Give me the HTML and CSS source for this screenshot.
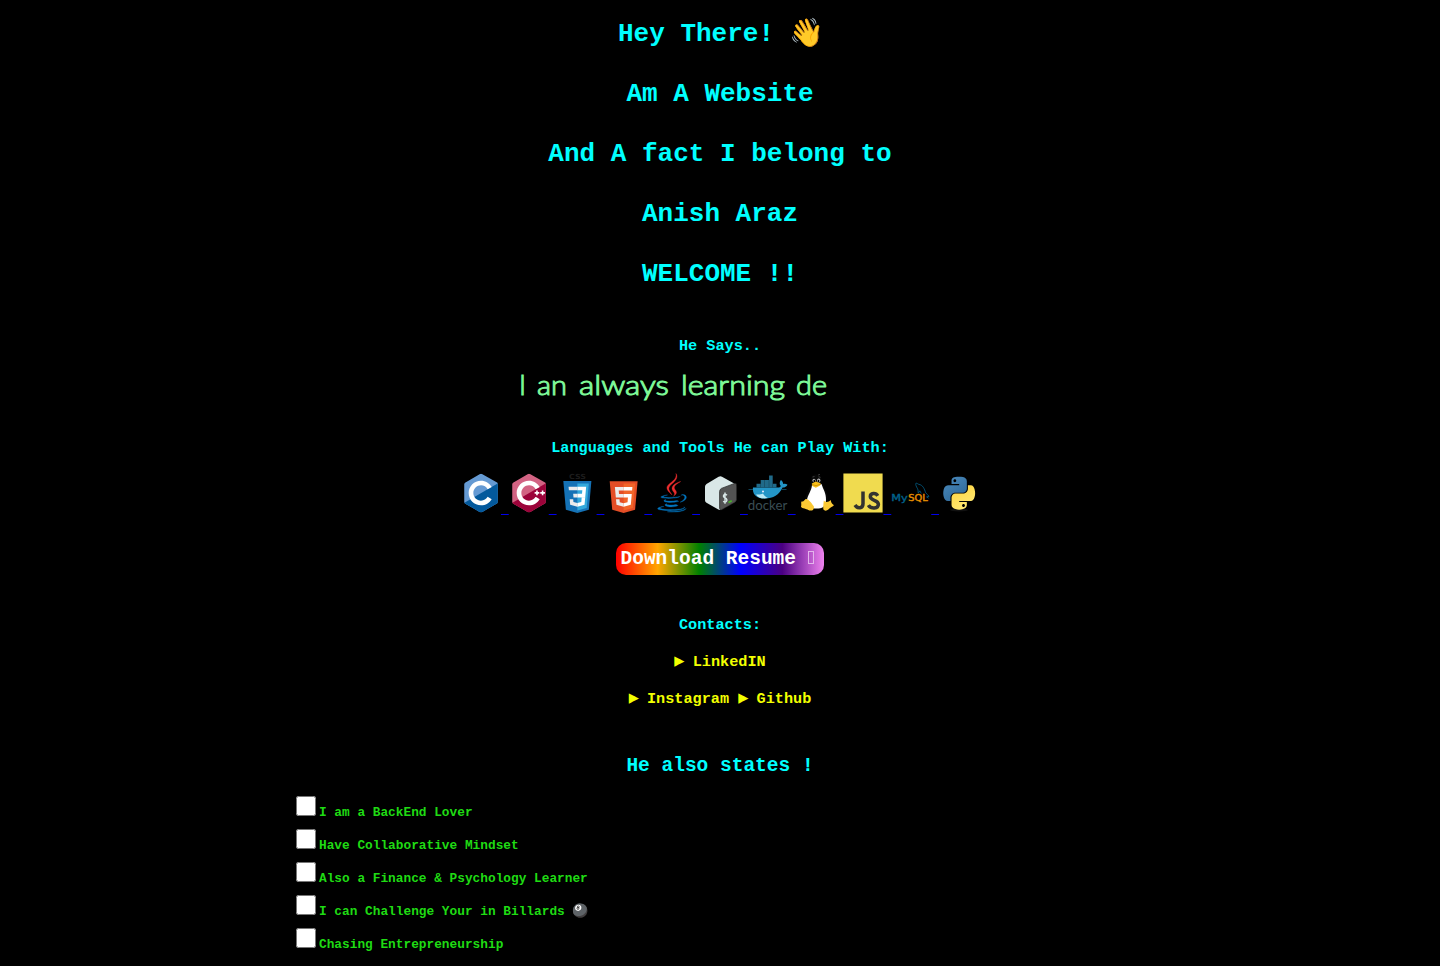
FILE: index.html
```html
<!DOCTYPE html>
<html lang="en">
<head>
<meta charset="utf-8">
<title>Anish Araz</title>
<link rel="stylesheet" href="styles.css">
</head>
<body>
<main class="page">
  <header class="intro">
    <h1>Hey There! <span class="wave">👋</span></h1>
    <h1>Am A Website</h1>
    <h1>And A fact I belong to</h1>
    <h1>Anish Araz</h1>
    <h1>WELCOME !!</h1>
  </header>

  <h3 class="says">He Says..</h3>
  <svg class="typing" width="420" height="50" viewBox="0 0 420 50">
    <text y="30"><tspan x="9">I</tspan><tspan x="27" textLength="30" lengthAdjust="spacingAndGlyphs">an</tspan><tspan x="69" textLength="90" lengthAdjust="spacingAndGlyphs">always</tspan><tspan x="171" textLength="104" lengthAdjust="spacingAndGlyphs">learning</tspan><tspan x="286" textLength="31" lengthAdjust="spacingAndGlyphs">de</tspan></text>
  </svg>

  <h3 class="tools-title">Languages and Tools He can Play With:</h3>
  <p class="tools">
    <a href="#"><svg viewBox="0 0 128 128"><defs><clipPath id="hex"><path d="M117.5 33.5l.3-.2c-.6-1.1-1.5-2.1-2.4-2.6L67.1 2.9c-.8-.5-1.9-.7-3.1-.7-1.2 0-2.3.3-3.1.7l-48 27.9c-1.7 1-2.9 3.5-2.9 5.4v55.7c0 1.1.2 2.3.9 3.4l-.2.1c.5.8 1.2 1.5 1.9 1.9l48.2 27.9c.8.5 1.9.7 3.1.7 1.2 0 2.3-.3 3.1-.7l48-27.9c1.7-1 2.9-3.5 2.9-5.4V36.1c.1-.8 0-1.7-.4-2.6z"/></clipPath></defs><g clip-path="url(#hex)"><path fill="#659ad3" d="M0 0h128v128H0z"/><path fill="#03599c" d="M0 102L128 27v101H0z"/></g><path fill="#fff" d="M85.3 76.1C81.1 83.5 73.1 88.5 64 88.5c-13.5 0-24.5-11-24.5-24.5s11-24.5 24.5-24.5c9.1 0 17.1 5 21.3 12.5l13-7.5c-6.8-11.9-19.6-20-34.3-20-21.8 0-39.5 17.7-39.5 39.5s17.7 39.5 39.5 39.5c14.6 0 27.4-8 34.2-19.8l-12.9-7.6z"/></svg> </a>
    <a href="#"><svg viewBox="0 0 128 128"><g clip-path="url(#hex)"><path fill="#d26383" d="M0 0h128v128H0z"/><path fill="#9c033a" d="M0 102L128 27v101H0z"/></g><path fill="#fff" d="M85.3 76.1C81.1 83.5 73.1 88.5 64 88.5c-13.5 0-24.5-11-24.5-24.5s11-24.5 24.5-24.5c9.1 0 17.1 5 21.3 12.5l13-7.5c-6.8-11.9-19.6-20-34.3-20-21.8 0-39.5 17.7-39.5 39.5s17.7 39.5 39.5 39.5c14.6 0 27.4-8 34.2-19.8l-12.9-7.6zM82 61h5v-5h5v5h5v5h-5v5h-5v-5h-5zM100 61h5v-5h5v5h5v5h-5v5h-5v-5h-5z"/></svg> </a>
    <a href="#"><svg viewBox="0 0 40 40"><text class="css-label" x="12" y="5.500" textLength="17" lengthAdjust="spacingAndGlyphs">CSS</text><g transform="translate(4.100 7.800) scale(.254)"><path fill="#1572b6" d="M8.76 1l10.055 112.883 45.118 12.58 45.244-12.626L119.24 1H8.76z"/><path fill="#33a9dc" d="M64.001 117.062l36.559-10.136 8.601-96.354h-45.16v106.49z"/><path fill="#fff" d="M64.001 51.429h18.302l1.264-14.163H64.001V23.435h34.682l-.332 3.711-3.4 38.114h-30.95V51.429z"/><path fill="#ebebeb" d="M64.083 87.349l-.061.018-15.403-4.159-.985-11.031H33.752l1.937 21.717 28.331 7.863.063-.018v-14.39z"/><path fill="#fff" d="M81.127 64.675l-1.666 18.522-15.426 4.164v14.39l28.354-7.858.208-2.337 2.406-26.881H81.127z"/><path fill="#ebebeb" d="M64.048 23.435v13.831H30.64l-.277-3.108-.63-7.012-.331-3.711h34.646zm-.047 27.996v13.831H48.792l-.277-3.108-.631-7.012-.33-3.711h16.447z"/></g></svg> </a>
    <a href="#"><svg viewBox="0 0 40 40"><g transform="translate(3.400 7.800) scale(.254)"><path fill="#e44d26" d="M9.032 2l10.005 112.093 44.896 12.401 45.02-12.387L118.968 2H9.032z"/><path fill="#f16529" d="M64 116.8l36.378-10.086 8.559-95.878H64z"/><path fill="#ebebeb" d="M64 52.455H45.788L44.53 38.361H64V24.599H29.489l.33 3.692 3.382 37.927H64zm0 35.743l-.061.017-15.327-4.14-.979-10.975H33.816l1.928 21.609 28.193 7.826.063-.017z"/><path fill="#fff" d="M63.952 52.455v13.763h16.947l-1.597 17.849-15.35 4.143v14.319l28.215-7.82.207-2.325 3.234-36.233.335-3.696h-3.708zm0-27.856v13.762h33.244l.276-3.092.628-6.978.329-3.692z"/></g></svg> </a>
    <a href="#"><svg viewBox="0 0 128 128"><path fill="#0074bd" stroke="#0074bd" d="M47.617 98.12c-19.192 5.362 11.677 16.439 36.115 5.969-4.003-1.556-6.874-3.351-6.874-3.351-10.897 2.06-15.952 2.222-25.844 1.092-8.164-.935-3.397-3.71-3.397-3.71zm33.189-10.46c-14.444 2.779-22.787 2.69-33.354 1.6-8.171-.845-2.822-4.805-2.822-4.805-21.137 7.016 11.767 14.977 41.309 6.336-3.14-1.106-5.133-3.131-5.133-3.131zM102.123 108.229s3.529 2.91-3.888 5.159c-14.102 4.272-58.706 5.56-71.095.171-4.45-1.938 3.899-4.625 6.526-5.192 2.739-.593 4.303-.485 4.303-.485-4.952-3.487-32.013 6.85-13.742 9.815 49.821 8.076 90.817-3.637 77.896-9.468zM85 77.896c2.395-1.634 5.703-3.053 5.703-3.053s-9.424 1.685-18.813 2.474c-11.494.964-23.823 1.154-30.012.326-14.652-1.959 8.033-7.348 8.033-7.348s-8.812-.596-19.644 4.644C17.455 81.134 61.958 83.958 85 77.896zm5.609 15.145c-.108.29-.468.616-.468.616 31.273-8.221 19.775-28.979 4.822-23.725-1.312.464-2 1.543-2 1.543s.829-.334 2.678-.72c7.559-1.575 18.389 10.119-5.032 22.286zM49 124c24 3 58 0 60-11-2 6-28 11-60 11z"/><path fill="#ea2d2e" stroke="#ea2d2e" d="M76.491 1.587S89.459 14.563 64.188 34.51c-20.266 16.006-4.621 25.13-.007 35.559-11.831-10.673-20.509-20.07-14.688-28.815C58.041 28.42 81.722 22.195 76.491 1.587zM92.125 27.085s-42.731 10.669-22.323 34.187c6.024 6.935-1.58 13.17-1.58 13.17s15.289-7.891 8.269-17.777c-6.559-9.215-11.587-13.793 15.634-29.58z"/></svg> </a>
    <a href="#"><svg viewBox="0 0 40 40"><path fill="#d9e7e7" d="M18.600 3.800q1.800-1 3.400-.1l12.600 7q1.600 1 1.600 2.800v13q0 1.700-1.400 2.500L21.500 36.600q-1.600.9-3.200 0L6.500 29.800Q5 29 5 27.200V13.800q0-1.900 1.500-2.800z"/><path fill="#535353" stroke="#202020" stroke-width=".7" d="M19.600 18.600q0-2.200 1.800-3.200l13.200-5q1.900-.6 1.900 1.600v14.500q0 1.700-1.400 2.500l-13.200 7.600q-2.100.9-2.300-1.200z"/><path fill="none" stroke="#d9e7e7" stroke-width="1.400" d="M27 22.300q-1.900-1.900-3.100-.4-1.300 1.900 1.100 3 2.900 1.300 1.400 3.500-1.300 1.600-3.200-.2M25 19.600v11.200"/><path fill="none" stroke="#47b328" stroke-width="1.700" d="M28.500 29.400l3.200-1.700"/></svg> </a>
    <a href="#"><svg viewBox="0 0 40 40"><path fill="#2395c6" d="M5 14.600h25c1.900 0 2.600-.8 2.800-1.600-1.800-1.800-1-4.300.1-5.900 1.500 1.200 2.300 2.300 2.200 4 1.500-.5 3.300-.2 4.400.7-.9 1.900-2.500 2.800-4.900 2.800C31.200 22 25.200 25.600 17 25.600 10.300 25.600 4 22.600 5 14.600z"/><path fill="#b9e8f4" d="M8 21.500c3 .3 5 0 7-1 1 2 3 3.500 5 4.500-5 1.200-10 .2-12-3.500z"/><path fill="#206a89" d="M8.500 10.800h4v3.800h-4zm4.200-3.800h4v7.600h-4zm4.200 0h4v7.600h-4zm4.200-4.500h3.600v12.100h-3.600zm3.800 8.300h3.600v3.800h-3.600z"/><path stroke="#15566e" stroke-width=".8" d="M.5 16.500h4.500m29 0h4.500"/><circle cx="15" cy="18.500" r="1" fill="#eef"/><text class="docker-label" x="-.2" y="36.600" textLength="39.500" lengthAdjust="spacingAndGlyphs">docker</text></svg> </a>
    <a href="#"><svg viewBox="0 0 40 40"><path fill="#070707" d="M15 8c0-5 2-6.500 5-6.500S25.400 4 25.500 8c.2 4 7 11 6.500 19l-4 9H14l-5-9c1-7 6-12 6-19z"/><path fill="#fff" d="M16 12c2 2 5 1 9.500-1 1.500 5 4.800 9 4.500 16-.2 7-4 8.500-9.500 8.500S11.500 33 11 27c.5-5 4.500-9 5-15z"/><ellipse cx="18" cy="7.500" rx="1.500" ry="1.800" fill="#ccc"/><ellipse cx="22.700" cy="7.500" rx="1.700" ry="1.900" fill="#ccc"/><path d="M17.500 6.800h1.500v2.200h-1.500zm4.200 0h1.600v2.200h-1.600z"/><path fill="#f8bf18" d="M15.800 10.500l4-2.100 5 2-.7 2.200-4.300 2.200-3.500-1.800z"/><path fill="none" stroke="#b77900" stroke-width=".6" d="M16 11.500l4 1.200 4.500-1.500"/><path fill="#fbc934" d="M9.800 26c-1.200.2-1.300 2.500-4 2.600-1.300.2 0 2.600-.8 4.800-.3 2 4.400 2 8.300 4 3.500 1 5.300-1.500 4.400-4.300-1.900-2.400-5-7.600-7.900-7.100zm18 1.500c-.3 3-.8 7-.4 9.100 1.800 2.300 4.300.5 6.300-1.400 1.900-1.400 4.400-2.200 4-3.200-2-1.500-2.500-2.500-3-5-2 2.100-4.800 2.900-6.900.5z"/><path fill="none" stroke="#777" stroke-width=".5" d="M16.500 4l2-.5m4 .3l2 .5M22 2l2-.6"/></svg> </a>
    <a href="#"><svg viewBox="0 0 40 40"><path fill="#f0db4f" d="M.4.400h39.200v39.200H.4z"/><path fill="none" stroke="#323330" stroke-width="3.500" d="M20 18.500v12.200c0 5-5.500 5.300-8 1.300M34.700 22.800c-1.900-3.300-7.400-2.800-7.400.8 0 4.600 8.100 2.800 8.100 7.700 0 4.600-7.600 5-10 .8"/></svg> </a>
    <a href="#"><svg viewBox="0 0 40 40"><text class="mysql-label" y="28.200"><tspan x=".2" fill="#00618a" textLength="16.500" lengthAdjust="spacingAndGlyphs">My</tspan><tspan x="17.300" fill="#e48e00" textLength="19.500" lengthAdjust="spacingAndGlyphs">SQL</tspan></text><path fill="none" stroke="#00618a" stroke-width=".8" d="M27.300 20c-.7-1.500.3-2.400-.7-4.200-1.400-2.200-2.200-4.400-1.700-5.500 1.100-.5 2.200 1 3 1.100 4 .5 5.500 4.500 6.800 8.400 1 1 2.200 2 3.300 3.500l-2.400.6 2 1.300M27.300 20l1.500-2.200 1.500 2.700"/></svg> </a>
    <a href="#"><svg viewBox="0 0 40 40"><defs><linearGradient id="pb" x1="0" y1="0" x2=".7" y2="1"><stop stop-color="#4b8bbe"/><stop offset="1" stop-color="#306998"/></linearGradient><linearGradient id="py" x1="0" y1="0" x2=".5" y2="1"><stop stop-color="#ffd43b"/><stop offset="1" stop-color="#ffe873"/></linearGradient></defs><ellipse cx="20" cy="37" rx="9" ry="1.500" fill="#111"/><g transform="translate(3.300 3) scale(.264 .269)"><path fill="url(#pb)" d="M49.330 62h29.159C86.606 62 93 55.132 93 46.981V19.183c0-7.912-6.632-13.856-14.555-15.176-5.014-.835-10.195-1.215-15.187-1.191-4.990.023-9.612.448-13.805 1.191C37.098 6.188 35 10.758 35 19.183V30h29v4H23.776c-8.484 0-15.914 5.108-18.237 14.811-2.681 11.120-2.800 17.919 0 29.530C7.614 86.983 12.569 93 21.054 93H31V79.952C31 70.315 39.428 62 49.330 62zm-1.838-39.110c-3.026 0-5.478-2.479-5.478-5.545 0-3.079 2.451-5.581 5.478-5.581 3.015 0 5.479 2.502 5.479 5.581-.001 3.066-2.465 5.545-5.479 5.545z"/><path fill="url(#py)" d="M122.281 48.811C120.183 40.363 116.178 34 107.682 34H97v12.981C97 57.031 88.206 65 78.489 65H49.330C41.342 65 35 72.326 35 80.326v27.800c0 7.910 6.745 12.564 14.462 14.834 9.242 2.717 17.994 3.208 29.051 0C85.862 120.831 93 116.549 93 108.126V97H64v-4h43.682c8.484 0 11.647-5.776 14.599-14.660 3.047-9.145 2.916-17.799 0-29.529zm-41.955 55.606c3.027 0 5.479 2.479 5.479 5.547 0 3.076-2.451 5.579-5.479 5.579-3.015 0-5.478-2.502-5.478-5.579 0-3.068 2.463-5.547 5.478-5.547z"/></g></svg></a>
  </p>

  <a class="resume" href="#">Download Resume <span class="missing"></span></a>

  <h3 class="contacts-title">Contacts:</h3>
  <h3 class="contact-row"><a href="#"><span class="arrow">▶</span> LinkedIN</a></h3>
  <h3 class="contact-row"><a href="#"><span class="arrow">▶</span> Instagram</a> <a href="#"><span class="arrow">▶</span> Github</a></h3>

  <h2 class="states">He also states !</h2>
  <ul class="facts">
    <li><input type="checkbox" id="f1"><label for="f1">I am a BackEnd Lover</label></li>
    <li><input type="checkbox" id="f2"><label for="f2">Have Collaborative Mindset</label></li>
    <li><input type="checkbox" id="f3"><label for="f3">Also a Finance &amp; Psychology Learner</label></li>
    <li><input type="checkbox" id="f4"><label for="f4">I can Challenge Your in Billards <span class="ball">🎱</span></label></li>
    <li><input type="checkbox" id="f5"><label for="f5">Chasing Entrepreneurship</label></li>
  </ul>
</main>
</body>
</html>
```
FILE: styles.css
```css
html,
body {
  margin: 0;
  background: #000;
}

body {
  height: 966px;
  overflow: hidden;
  font-family: "Liberation Mono", monospace;
  font-size: 13px;
  color: #0ff;
}

.page {
  display: flex;
  flex-direction: column;
  align-items: center;
  padding-top: 4px;
}

h1,
h2,
h3 {
  margin: 0;
  text-align: center;
  white-space: pre;
}

h1 {
  font-size: 26px;
  line-height: 60px;
  height: 60px;
}

.wave {
  margin: 0 -1.6px 0 -1px;
  font-size: 28px;
  line-height: 0;
  vertical-align: -1px;
}

h3 {
  font-size: 15.21px;
  line-height: 18px;
  height: 18px;
}

.says {
  margin-top: 33px;
}

.typing {
  display: block;
  margin-top: 10px;
}

.typing text {
  font: 300 27px Lato, sans-serif;
  fill: #7df897;
  stroke: #7df897;
  stroke-width: 1px;
}

.tools-title {
  margin-top: 24px;
}

.tools {
  margin: 16px 0 0;
  height: 45px;
  white-space: nowrap;
}

.tools a {
  color: #00e;
}

.tools svg {
  width: 40px;
  height: 40px;
}

.css-label {
  font: bold 7px "DejaVu Sans", sans-serif;
  fill: #1c1c1c;
}

.docker-label {
  font: 400 13.5px Lato, sans-serif;
  fill: #3a4d54;
}

.mysql-label {
  font: 400 9.5px "DejaVu Sans", sans-serif;
  stroke-width: 0.4px;
}

.mysql-label tspan:first-child {
  stroke: #00618a;
}

.mysql-label tspan:last-child {
  stroke: #e48e00;
}

.resume {
  display: flex;
  align-items: center;
  box-sizing: border-box;
  width: 208px;
  height: 32px;
  margin-top: 25px;
  padding: 0 4.5px 1px;
  border-radius: 10px;
  background: linear-gradient(to right, red, orange, green, blue, indigo, violet);
  color: #fff;
  font-size: 19.5px;
  font-weight: bold;
  text-decoration: none;
  white-space: pre;
}

.missing {
  box-sizing: border-box;
  width: 6px;
  height: 13px;
  margin-bottom: 2px;
  border: 1px solid #e3b5ec;
}

.contacts-title {
  margin-top: 41px;
}

.contact-row {
  margin-top: 19px;
}

.contact-row a {
  color: #f2ff00;
  text-decoration: none;
}

.arrow {
  margin-right: -1.1px;
  font-family: "DejaVu Sans Mono", monospace;
  font-size: 17px;
  line-height: 0;
}

.states {
  margin-top: 46px;
  font-size: 19.5px;
  line-height: 24px;
}

.facts {
  align-self: stretch;
  margin: 15px 0 0;
  padding: 0 0 0 293px;
  list-style: none;
  color: #1fdb13;
  font-size: 12.8px;
  font-weight: bold;
}

.facts li {
  display: flex;
  align-items: flex-start;
  height: 33px;
}

.facts input {
  width: 20px;
  height: 20px;
  margin: 3px;
}

.facts label {
  padding-top: 12px;
  line-height: 16px;
  white-space: pre;
}

.ball {
  margin-left: -0.5px;
  font-size: 13px;
  line-height: 0;
}
```
